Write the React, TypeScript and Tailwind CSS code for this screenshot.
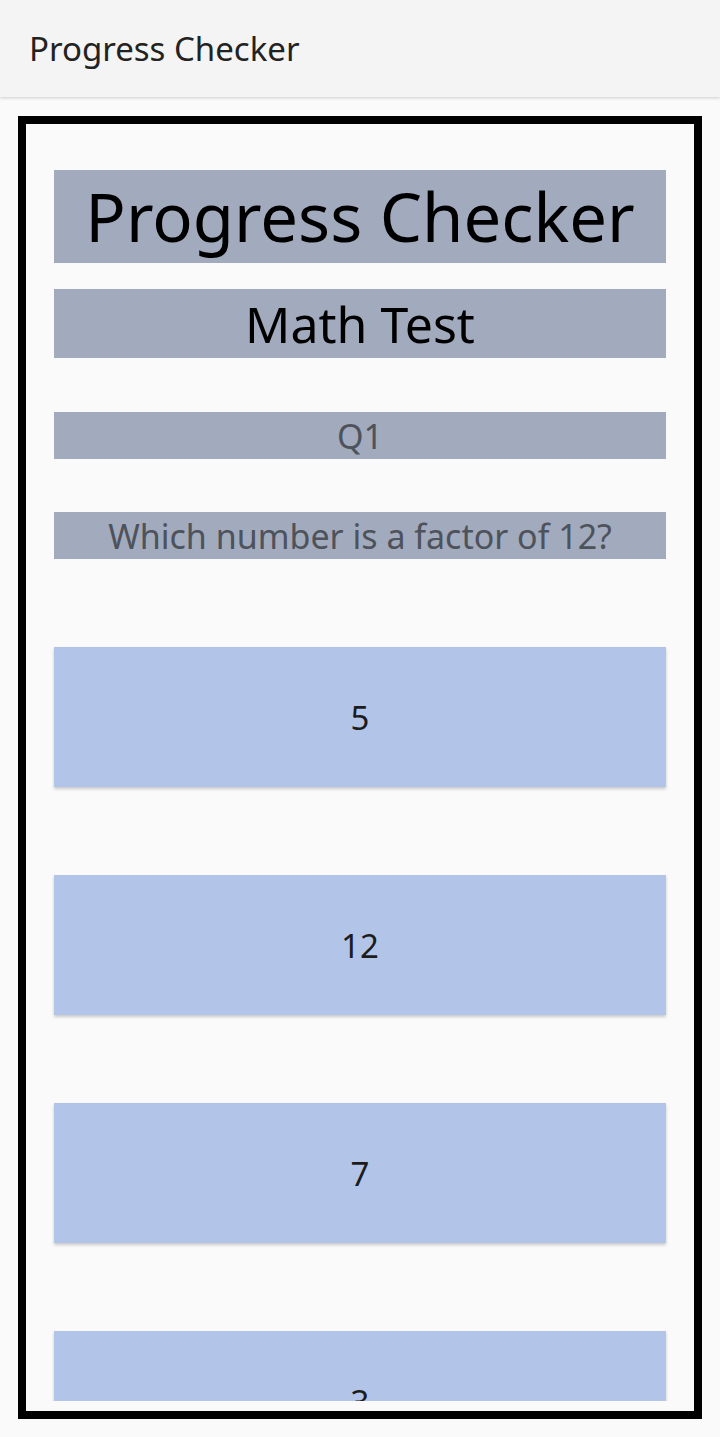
import React from "react";

const font = { fontFamily: '"Noto Sans", "Open Sans", sans-serif' };

export default function App() {
  const answers = ["5", "12", "7", "3"];
  return (
    <div className="min-h-[1437px] bg-[#fafafa] flex flex-col" style={font}>
      <div className="h-[97px] bg-[#f4f4f4] shadow-[0_1px_3px_rgba(0,0,0,0.18)] flex items-center pl-[29px] relative z-10">
        <span className="text-[33px] leading-none text-[#222]">Progress Checker</span>
      </div>
      <div className="mx-[18px] mt-[19px] h-[1303px] border-[8px] border-black pb-[10px] flex flex-col">
        <div className="flex-1 overflow-hidden px-[28px] pt-[46px] flex flex-col">
          <div className="h-[93px] bg-[#a2aabd] flex items-center justify-center shrink-0">
            <span className="text-[67px] leading-none text-black whitespace-nowrap">Progress Checker</span>
          </div>
          <div className="h-[69px] mt-[26px] bg-[#a2aabd] flex items-center justify-center shrink-0">
            <span className="text-[50px] leading-none text-black">Math Test</span>
          </div>
          <div className="h-[47px] mt-[54px] bg-[#a2aabd] flex items-center justify-center shrink-0">
            <span className="text-[34px] leading-none text-[#4d525b]">Q1</span>
          </div>
          <div className="h-[47px] mt-[53px] bg-[#a2aabd] flex items-center justify-center shrink-0">
            <span className="text-[34px] leading-none text-[#4d525b] whitespace-nowrap">Which number is a factor of 12?</span>
          </div>
          <div className="mt-[88px] flex flex-col gap-[88px]">
            {answers.map((a) => (
              <div
                key={a}
                className="h-[140px] bg-[#b2c5e8] shadow-[0_2px_3px_rgba(0,0,0,0.2)] flex items-center justify-center shrink-0"
              >
                <span className="text-[33px] leading-none text-[#1c1c1c]">{a}</span>
              </div>
            ))}
          </div>
        </div>
      </div>
    </div>
  );
}
